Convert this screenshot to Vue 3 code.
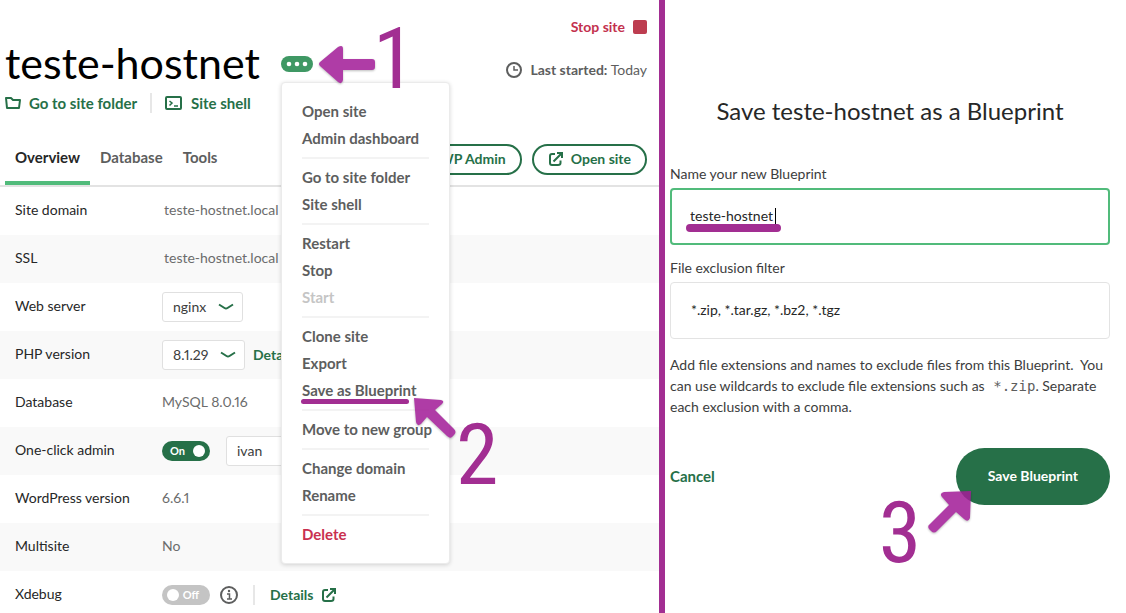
<script setup>
import { ref } from 'vue'

const menuGroups = [
  [{ label: 'Open site' }, { label: 'Admin dashboard' }],
  [{ label: 'Go to site folder' }, { label: 'Site shell' }],
  [{ label: 'Restart' }, { label: 'Stop' }, { label: 'Start', disabled: true }],
  [{ label: 'Clone site' }, { label: 'Export' }, { label: 'Save as Blueprint', marked: true }],
  [{ label: 'Move to new group' }],
  [{ label: 'Change domain' }, { label: 'Rename' }],
  [{ label: 'Delete', danger: true }],
]
const tabs = ['Overview', 'Database', 'Tools']
const activeTab = ref('Overview')
const server = ref('nginx')
const php = ref('8.1.29')
const oneClick = ref(true)
const xdebug = ref(false)
const admin = ref('ivan')
const blueprintName = ref('teste-hostnet')
const filter = ref('*.zip, *.tar.gz, *.bz2, *.tgz')
</script>

<template>
  <div class="page">
    <main class="site">
      <header class="head">
        <div>
          <div class="title-row">
            <h1>teste-hostnet</h1>
            <div class="more-wrap">
              <button class="more" type="button" aria-label="More actions" aria-expanded="true">
                <svg width="32" height="16" viewBox="0 0 32 16" fill="#fff"><circle cx="8" cy="8" r="2.3" /><circle cx="16" cy="8" r="2.3" /><circle cx="24" cy="8" r="2.3" /></svg>
              </button>
              <div class="menu">
                <div v-for="(group, i) in menuGroups" :key="i" class="group">
                  <button
                    v-for="item in group"
                    :key="item.label"
                    type="button"
                    class="item"
                    :class="{ danger: item.danger, marked: item.marked }"
                    :disabled="item.disabled"
                  >{{ item.label }}</button>
                </div>
                <svg class="arrow arrow-two" width="50" height="50" viewBox="0 0 50 50">
                  <path d="M4 4 L31 6 Q35 7 32 10 L25 16 L44 35 Q47 38 44 41 L42 43 Q40 45 37 42 L17 23 L11 30 Q7 33 6 28 Z" />
                </svg>
                <span class="digit digit-two">2</span>
              </div>
              <svg class="arrow arrow-one" width="60" height="42" viewBox="0 0 60 42">
                <path d="M3 22 Q1 20 3 18 L21 3 Q26 0 26 5 V15 H55 Q58 15 58 18 V23 Q58 26 55 26 H26 V36 Q25 41 21 38 Z" />
              </svg>
              <span class="digit digit-one">1</span>
            </div>
          </div>
          <nav class="links">
            <a href="#folder">
              <svg width="16" height="14" viewBox="0 0 16 14" fill="none" stroke="#267048" stroke-width="2"><path d="M1 2 H6 L8 4 H15 L14 12 H2 Z" stroke-linejoin="round" /></svg>
              Go to site folder
            </a>
            <i class="rule"></i>
            <a href="#shell">
              <svg width="18" height="16" viewBox="0 0 18 16" fill="none" stroke="#267048" stroke-width="2"><rect x="1" y="2" width="15" height="12" rx="1" /><path d="M4.500 6 L7 8 L4.500 10.500 M9 11 H13" stroke-width="1.500" /></svg>
              Site shell
            </a>
          </nav>
        </div>
        <div class="status">
          <button class="stop" type="button">Stop site <i class="square"></i></button>
          <p class="started">
            <svg width="18" height="18" viewBox="0 0 18 18" fill="none" stroke="#5d5e5e" stroke-width="2"><circle cx="9" cy="9" r="7" /><path d="M9 5 V9 H13" stroke-width="1.500" /></svg>
            <span><b>Last started:</b> Today</span>
          </p>
        </div>
      </header>

      <div class="bar">
        <nav class="tabs">
          <button v-for="t in tabs" :key="t" type="button" class="tab" :class="{ active: t === activeTab }" @click="activeTab = t">{{ t }}</button>
        </nav>
        <div class="actions">
          <button class="pill" type="button">WP Admin</button>
          <button class="pill" type="button">
            <svg width="16" height="16" viewBox="0 0 16 16" fill="none" stroke="#267048" stroke-width="2"><path d="M7 3 H4 Q2 3 2 5 V12 Q2 14 4 14 H10 Q12.500 14 12.500 12 V9.500 M5.500 10.500 L13.500 2.500 M9 2 H14 V7" /></svg>
            Open site
          </button>
        </div>
      </div>

      <table class="rows">
        <tbody>
          <tr><th scope="row">Site domain</th><td><span class="indent">teste-hostnet.local</span></td></tr>
          <tr><th scope="row">SSL</th><td><span class="indent">teste-hostnet.local</span></td></tr>
          <tr>
            <th scope="row"><label for="server">Web server</label></th>
            <td class="controls">
              <div class="cell">
                <span class="select">
                  <select id="server" v-model="server"><option>nginx</option></select>
                  <svg width="16" height="8" viewBox="0 0 16 8" fill="none" stroke="#267048" stroke-width="2"><path d="M1 1.500 L6.500 5 Q8 6 9.500 5 L15 1.500" /></svg>
                </span>
              </div>
            </td>
          </tr>
          <tr>
            <th scope="row"><label for="php">PHP version</label></th>
            <td class="controls">
              <div class="cell">
                <span class="select">
                  <select id="php" v-model="php"><option>8.1.29</option></select>
                  <svg width="16" height="8" viewBox="0 0 16 8" fill="none" stroke="#267048" stroke-width="2"><path d="M1 1.500 L6.500 5 Q8 6 9.500 5 L15 1.500" /></svg>
                </span>
                <a class="details" href="#php">Details</a>
              </div>
            </td>
          </tr>
          <tr><th scope="row">Database</th><td>MySQL 8.0.16</td></tr>
          <tr>
            <th scope="row"><label for="oneclick">One-click admin</label></th>
            <td class="controls">
              <div class="cell">
                <label class="toggle" :class="{ on: oneClick }">
                  <input id="oneclick" v-model="oneClick" type="checkbox" />
                  <span>{{ oneClick ? 'On' : 'Off' }}</span><i></i>
                </label>
                <select v-model="admin" class="user" aria-label="Admin user"><option>ivan</option></select>
              </div>
            </td>
          </tr>
          <tr><th scope="row">WordPress version</th><td>6.6.1</td></tr>
          <tr><th scope="row">Multisite</th><td>No</td></tr>
          <tr>
            <th scope="row"><label for="xdebug">Xdebug</label></th>
            <td class="controls">
              <div class="cell">
                <label class="toggle" :class="{ on: xdebug }">
                  <input id="xdebug" v-model="xdebug" type="checkbox" />
                  <span>{{ xdebug ? 'On' : 'Off' }}</span><i></i>
                </label>
                <svg class="info" width="18" height="18" viewBox="0 0 18 18" fill="none" stroke="#5d5e5e" stroke-width="2"><circle cx="9" cy="9" r="8" /><path d="M7 8 H9.500 V13 M7 13 H12" stroke-width="1.500" /><circle cx="9" cy="5" r="1.200" fill="#5d5e5e" stroke="none" /></svg>
                <i class="rule"></i>
                <a class="details" href="#xdebug">
                  Details
                  <svg width="16" height="16" viewBox="0 0 16 16" fill="none" stroke="#267048" stroke-width="2"><path d="M7 3 H4 Q2 3 2 5 V12 Q2 14 4 14 H10 Q12.500 14 12.500 12 V9.500 M5.500 10.500 L13.500 2.500 M9 2 H14 V7" /></svg>
                </a>
              </div>
            </td>
          </tr>
        </tbody>
      </table>
    </main>

    <form class="blueprint" @submit.prevent>
      <h2>Save teste-hostnet as a Blueprint</h2>
      <label for="name">Name your new Blueprint</label>
      <div class="field">
        <input id="name" v-model="blueprintName" class="focused" type="text" />
        <i class="caret"></i>
        <i class="stroke"></i>
      </div>
      <label for="filter">File exclusion filter</label>
      <div class="field">
        <input id="filter" v-model="filter" type="text" />
      </div>
      <p class="help">Add file extensions and names to exclude files from this Blueprint.&nbsp; You can use wildcards to exclude file extensions such as <code>*.zip</code>. Separate each exclusion with a comma.</p>
      <div class="footer">
        <button class="cancel" type="button">Cancel</button>
        <div class="save-wrap">
          <button class="save" type="submit">Save Blueprint</button>
          <svg class="arrow arrow-three" width="48" height="48" viewBox="0 0 48 48">
            <path d="M45 3 L44 30 Q42 35 38 31 L30 24 L11 43 Q8 46 5 43 L3 41 Q1 38 4 36 L23 17 L16 9 Q13 5 18 4 Z" />
          </svg>
          <span class="digit digit-three">3</span>
        </div>
      </div>
    </form>
  </div>
</template>

<style>
body { margin: 0; background: #fff; }
</style>

<style scoped>
* { box-sizing: border-box; }
.page {
  display: grid;
  grid-template-columns: 665fr 461fr;
  height: 100vh;
  overflow: hidden;
  font: 400 14px/24px Lato, "Noto Sans", sans-serif;
  color: #262727;
}
button, input, select { font: inherit; color: inherit; }
button { border: 0; padding: 0; background: none; cursor: pointer; }
a { color: #267048; text-decoration: none; font-weight: 700; }
svg { display: block; flex: none; }
h1, h2, p { margin: 0; }

.site { min-width: 0; border-right: 6px solid #a22e92; }
.head { display: flex; justify-content: space-between; height: 131px; padding: 0 12px 0 5px; }
.title-row { display: flex; align-items: center; gap: 21px; padding-top: 37px; }
h1 { padding-bottom: 2px; font-size: 43px; line-height: 52px; font-weight: 400; color: #000; }
.more-wrap { position: relative; }
.more { display: block; border-radius: 8px; background: #3f9864; }
.links { display: flex; align-items: center; gap: 13px; font-size: 15px; }
.links a { display: flex; align-items: center; gap: 8px; }
.rule { width: 2px; height: 20px; background: #e7e7e7; }
.status { display: flex; flex-direction: column; align-items: flex-end; gap: 19px; padding-top: 15px; }
.stop { display: flex; align-items: center; gap: 8px; color: #c3314e; font-weight: 700; }
.square { width: 14px; height: 14px; border-radius: 2px; background: #bd3d50; }
.started { display: flex; align-items: center; gap: 7px; color: #5d5e5e; }

.menu {
  position: absolute; z-index: 2; top: 26px; left: 0; width: 169px; padding: 15px 20px;
  border: 1px solid #ebebeb; border-radius: 4px; background: #fff;
  box-shadow: 0 1px 4px rgba(0, 0, 0, 0.16);
}
.group + .group { margin-top: 5px; padding-top: 5px; border-top: 2px solid #f3f3f3; }
.item { position: relative; display: block; font-size: 15px; line-height: 27px; font-weight: 700; color: #5d5e5e; white-space: nowrap; }
.item:disabled { color: #c5c5c5; }
.item.danger { color: #c9304f; }
.marked::after { content: ""; position: absolute; left: -1px; top: 22px; width: 108px; height: 5px; border-radius: 3px; background: #a22e92; }

.arrow { position: absolute; z-index: 3; fill: #a31d98; opacity: 0.86; filter: drop-shadow(0 1px 1px rgba(0, 0, 0, 0.3)); }
.arrow-one { left: 36px; top: -12px; }
.arrow-two { left: 128px; top: 311px; }
.arrow-three { left: -30px; top: 40px; }
.digit { position: absolute; z-index: 3; font: 400 86px/88px "Liberation Sans Narrow", "Roboto Condensed", Roboto, sans-serif; color: #a22e92; }
.digit-one { left: 92px; top: -41px; }
.digit-two { left: 174px; top: 328px; }
.digit-three { left: -77px; top: 41px; }

.bar { display: flex; justify-content: space-between; height: 56px; padding: 0 12px 0 5px; border-bottom: 2px solid #e3e3e3; }
.tabs { display: flex; }
.tab { padding: 2px 10px 0; border-bottom: 4px solid transparent; font-size: 15px; font-weight: 700; color: #5d5e5e; }
.tab.active { color: #262727; border-color: #51bb7b; }
.actions { display: flex; align-items: center; gap: 10px; padding-top: 2px; }
.pill { display: flex; align-items: center; gap: 7px; height: 31px; padding: 0 14px; border: 2px solid #267048; border-radius: 16px; font-weight: 700; color: #267048; }

.rows { width: 100%; border-collapse: collapse; font-variant-numeric: proportional-nums; }
.rows tr { height: 48px; }
.rows tr:nth-child(even) { background: #f9f9f9; }
.rows th { width: 162px; padding: 0 0 2px 15px; text-align: left; font-weight: 400; }
.rows td { padding: 0 0 2px; color: #6b6c6c; }
.rows td.controls { padding: 0; }
.indent { padding-left: 2px; }
.cell { display: flex; align-items: center; }
.select { position: relative; display: flex; align-items: center; }
.select svg { position: absolute; right: 9px; }
.select select { padding: 0 35px 0 10px; }
select { height: 30px; appearance: none; border: 1px solid #e0e0e0; border-radius: 3px; background: #fff; color: #3c3d3d; font-variant-numeric: proportional-nums; }
.user { width: 96px; margin-left: 16px; padding: 0 10px; }
.details { display: flex; align-items: center; gap: 8px; margin-left: 8px; }
.rule + .details { margin-left: 15px; }
.toggle { position: relative; display: flex; flex-direction: row-reverse; align-items: center; justify-content: space-between; width: 48px; height: 20px; padding: 0 11px 0 5px; border-radius: 10px; background: #c4c4c4; color: #fff; font-size: 11px; font-weight: 700; }
.toggle i { width: 12px; height: 12px; border-radius: 50%; background: #fff; }
.toggle.on { flex-direction: row; padding: 0 5px 0 8px; background: #267048; }
.toggle input { position: absolute; inset: 0; width: 100%; height: 100%; margin: 0; opacity: 0; }
.info { margin: 0 15px 0 10px; }

.blueprint { min-width: 0; padding: 95px 16px 0 5px; }
h2 { font-size: 24px; line-height: 32px; font-weight: 400; text-align: center; margin-bottom: 35px; }
.blueprint > label { display: block; line-height: 24px; margin-bottom: 2px; color: #3c3d3d; }
.field { position: relative; margin-bottom: 11px; }
.field input { display: block; width: 100%; height: 57px; padding: 0 20px 3px; border: 1px solid #e3e3e3; border-radius: 4px; outline: 0; background: #fff; }
.field input.focused { padding: 0 18px 3px; border: 2px solid #51bb7b; }
.caret { position: absolute; left: 105px; top: 20px; width: 1px; height: 16px; background: #000; }
.stroke { position: absolute; left: 16px; top: 36px; width: 95px; height: 8px; border-radius: 4px; background: #a22e92; }
.help { margin-top: 15px; line-height: 21px; color: #3c3d3d; }
code { margin-left: 5px; font: 14px/20px "DejaVu Sans Mono", monospace; color: #5d5e5e; }
.footer { display: flex; align-items: center; justify-content: space-between; margin-top: 31px; }
.cancel { padding-bottom: 2px; font-size: 15px; font-weight: 700; color: #267048; }
.save-wrap { position: relative; }
.save { display: block; height: 57px; padding: 0 32px 2px; border-radius: 29px; background: #267048; color: #fff; font-weight: 700; }
</style>
